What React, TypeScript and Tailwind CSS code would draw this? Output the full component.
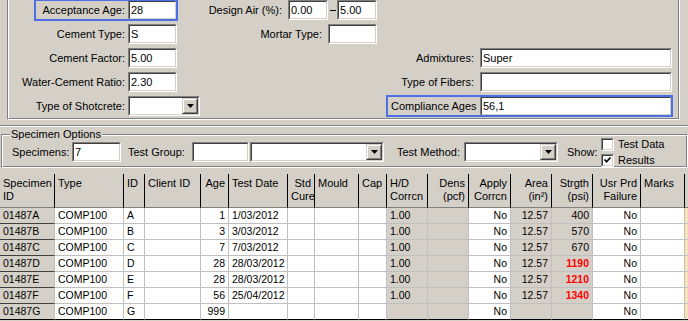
import React from "react"

// sunken text box, classic windows look
function Field({ w, value, children }: { w: string; value?: string; children?: React.ReactNode }) {
  return (
    <div className={`h-[20px] shrink-0 border border-t-[#808080] border-l-[#808080] border-r-white border-b-white bg-white ${w}`}>
      <div className="flex h-full border border-t-[#404040] border-l-[#404040] border-r-[#d4d0c8] border-b-[#d4d0c8]">
        <span className="flex-1 pl-[1px] leading-[16px] whitespace-nowrap">{value}</span>
        {children}
      </div>
    </div>
  )
}

function DropButton() {
  return (
    <div className="h-[16px] w-[16px] shrink-0 border border-t-[#d4d0c8] border-l-[#d4d0c8] border-r-[#404040] border-b-[#404040] bg-[#d4d0c8]">
      <div className="flex h-full items-center justify-center border border-t-white border-l-white border-r-[#808080] border-b-[#808080]">
        <svg width="7" height="4" viewBox="0 0 7 4">
          <path d="M0 0H7L3.5 4Z" fill="#000" />
        </svg>
      </div>
    </div>
  )
}

function Combo({ w }: { w: string }) {
  return (
    <Field w={w}>
      <DropButton />
    </Field>
  )
}

function Check({ checked }: { checked?: boolean }) {
  return (
    <div className="h-[13px] w-[13px] shrink-0 border border-t-[#808080] border-l-[#808080] border-r-white border-b-white bg-white">
      <div className="h-full border border-t-[#404040] border-l-[#404040] border-r-[#d4d0c8] border-b-[#d4d0c8]">
        {checked && (
          <svg width="9" height="9" viewBox="0 0 9 9" className="block">
            <path d="M1.5 3.5L3.5 5.8L7.5 1.5" stroke="#000" strokeWidth="1.7" fill="none" />
          </svg>
        )}
      </div>
    </div>
  )
}

const Label = ({ w, children, left }: { w: string; children: React.ReactNode; left?: boolean }) => (
  <span className={`shrink-0 leading-[20px] whitespace-nowrap ${left ? "text-left pl-[4px]" : "text-right pr-[3px]"} ${w}`}>{children}</span>
)

type Col = { head: [string, string?]; right?: boolean; gray?: boolean }

const columns: Col[] = [
  { head: ["Specimen", "ID"], gray: true },
  { head: ["Type"] },
  { head: ["ID"] },
  { head: ["Client ID"] },
  { head: ["Age"], right: true },
  { head: ["Test Date"] },
  { head: ["Std", "Cure"], right: true },
  { head: ["Mould"] },
  { head: ["Cap"] },
  { head: ["H/D", "Corrcn"], gray: true },
  { head: ["Dens", "(pcf)"], right: true, gray: true },
  { head: ["Apply", "Corrcn"], right: true },
  { head: ["Area", "(in²)"], right: true, gray: true },
  { head: ["Strgth", "(psi)"], right: true, gray: true },
  { head: ["Usr Prd", "Failure"], right: true },
  { head: ["Marks"] },
  { head: [""] },
]

const rows = [
  ["01487A", "COMP100", "A", "", "1", "1/03/2012", "", "", "", "1.00", "", "No", "12.57", "400", "No", "", ""],
  ["01487B", "COMP100", "B", "", "3", "3/03/2012", "", "", "", "1.00", "", "No", "12.57", "570", "No", "", ""],
  ["01487C", "COMP100", "C", "", "7", "7/03/2012", "", "", "", "1.00", "", "No", "12.57", "670", "No", "", ""],
  ["01487D", "COMP100", "D", "", "28", "28/03/2012", "", "", "", "1.00", "", "No", "12.57", "1190", "No", "", ""],
  ["01487E", "COMP100", "E", "", "28", "28/03/2012", "", "", "", "1.00", "", "No", "12.57", "1210", "No", "", ""],
  ["01487F", "COMP100", "F", "", "56", "25/04/2012", "", "", "", "1.00", "", "No", "12.57", "1340", "No", "", ""],
  ["01487G", "COMP100", "G", "", "999", "", "", "", "", "", "", "No", "", "", "No", "", ""],
]

const redValues = ["1190", "1210", "1340"]

export default function App() {
  return (
    <div className="h-[321px] w-[688px] overflow-hidden bg-[#d4d0c8] text-[11px] text-black font-['Liberation_Sans',Arial,sans-serif]">
      {/* mix design panel (scrolled, top edge out of view) */}
      <div className="ml-[7px] w-[673px] border-l border-r border-b border-l-[#808080] border-r-white border-b-white">
        <div className="flex flex-col gap-[4px] border-l border-r border-b border-l-white border-r-[#808080] border-b-[#808080] pb-[2px]">
          <div className="flex h-[20px]">
            <span className="w-[26px] shrink-0" />
            <div className="flex outline-2 outline-offset-[-1px] outline-[#4d6fe6]">
              <Label w="w-[93px]">Acceptance Age:</Label>
              <Field w="w-[49px]" value="28" />
            </div>
            <Label w="w-[111px] pr-[6px]">Design Air (%):</Label>
            <Field w="w-[40px]" value="0.00" />
            <span className="flex w-[9px] shrink-0 items-center justify-center">
              <span className="h-[1px] w-[6px] bg-black" />
            </span>
            <Field w="w-[40px]" value="5.00" />
          </div>
          <div className="flex h-[20px]">
            <Label w="w-[119px]">Cement Type:</Label>
            <Field w="w-[49px]" value="S" />
            <Label w="w-[151px] pr-[6px]">Mortar Type:</Label>
            <Field w="w-[49px]" />
          </div>
          <div className="flex h-[20px]">
            <Label w="w-[119px]">Cement Factor:</Label>
            <Field w="w-[49px]" value="5.00" />
            <Label w="w-[303px] pr-[6px]">Admixtures:</Label>
            <Field w="w-[192px]" value="Super" />
          </div>
          <div className="flex h-[20px]">
            <Label w="w-[119px]">Water-Cement Ratio:</Label>
            <Field w="w-[49px]" value="2.30" />
            <Label w="w-[303px] pr-[6px]">Type of Fibers:</Label>
            <Field w="w-[192px]" />
          </div>
          <div className="flex h-[20px]">
            <Label w="w-[119px]">Type of Shotcrete:</Label>
            <Combo w="w-[72px]" />
            <span className="w-[187px] shrink-0" />
            <div className="flex outline-2 outline-offset-[-1px] outline-[#4d6fe6]">
              <Label w="w-[93px]" left>Compliance Ages</Label>
              <Field w="w-[192px]" value="56,1" />
            </div>
          </div>
        </div>
      </div>

      {/* splitter between panels */}
      <div className="mt-[5px] h-[2px] border-t border-b border-t-[#808080] border-b-white" />

      {/* specimen options group */}
      <div className="relative ml-[1px] mt-[7px] w-[687px] border-t border-l border-r border-b border-t-[#808080] border-l-[#808080] border-r-white border-b-white">
        <span className="absolute left-[8px] top-[-8px] bg-[#d4d0c8] px-[1px] leading-[14px]">Specimen Options</span>
        <div className="flex h-[32px] items-center border-t border-l border-r border-b border-t-white border-l-white border-r-[#808080] border-b-[#808080] pl-[9px] pt-[2px]">
          <span className="w-[60px] shrink-0">Specimens:</span>
          <Field w="w-[49px]" value="7" />
          <span className="ml-[7px] w-[64px] shrink-0">Test Group:</span>
          <Field w="w-[57px]" />
          <span className="w-[1px] shrink-0" />
          <Combo w="w-[134px]" />
          <span className="ml-[13px] w-[67px] shrink-0">Test Method:</span>
          <Combo w="w-[94px]" />
          <span className="ml-[9px] w-[34px] shrink-0">Show:</span>
          <div className="flex flex-col gap-[3px]">
            <div className="flex items-center gap-[4px] leading-[13px]">
              <Check />
              <span>Test Data</span>
            </div>
            <div className="flex items-center gap-[4px] leading-[13px]">
              <Check checked />
              <span>Results</span>
            </div>
          </div>
        </div>
      </div>

      {/* results grid */}
      <div className="mt-[6px] w-[688px] overflow-hidden">
        <div className="grid w-[705px] grid-cols-[55px_69px_21px_56px_28px_59px_27px_44px_28px_41px_41px_42px_41px_41px_48px_44px_20px]">
          {columns.map((c, i) => (
            <div
              key={"h" + i}
              className={`h-[34px] border-r border-b border-r-black border-b-[#808080] bg-[#d4d0c8] px-[3px] pt-[3px] leading-[13px] whitespace-nowrap ${c.right ? "text-right" : "text-left"}`}
            >
              <div>{c.head[0]}</div>
              {c.head[1] && <div>{c.head[1]}</div>}
            </div>
          ))}
          {rows.map((r, ri) =>
            r.map((v, ci) => {
              const c = columns[ci]
              const first = ci === 0
              const last = ci === columns.length - 1
              return (
                <div
                  key={ri + "-" + ci}
                  className={`h-[16px] border-r border-b px-[3px] text-[10.5px] leading-[15px] whitespace-nowrap ${
                    first ? "border-b-[#404040] border-r-[#c0c0c0]" : "border-[#c0c0c0]"
                  } ${last ? "bg-[#f8e2bc]" : c.gray ? "bg-[#d4d0c8]" : "bg-white"} ${c.right ? "text-right" : "text-left"} ${
                    redValues.includes(v) ? "font-bold text-[#ff0000]" : ""
                  } ${ri === rows.length - 1 ? "border-b-black" : ""}`}
                >
                  {v}
                </div>
              )
            })
          )}
        </div>
      </div>
    </div>
  )
}
